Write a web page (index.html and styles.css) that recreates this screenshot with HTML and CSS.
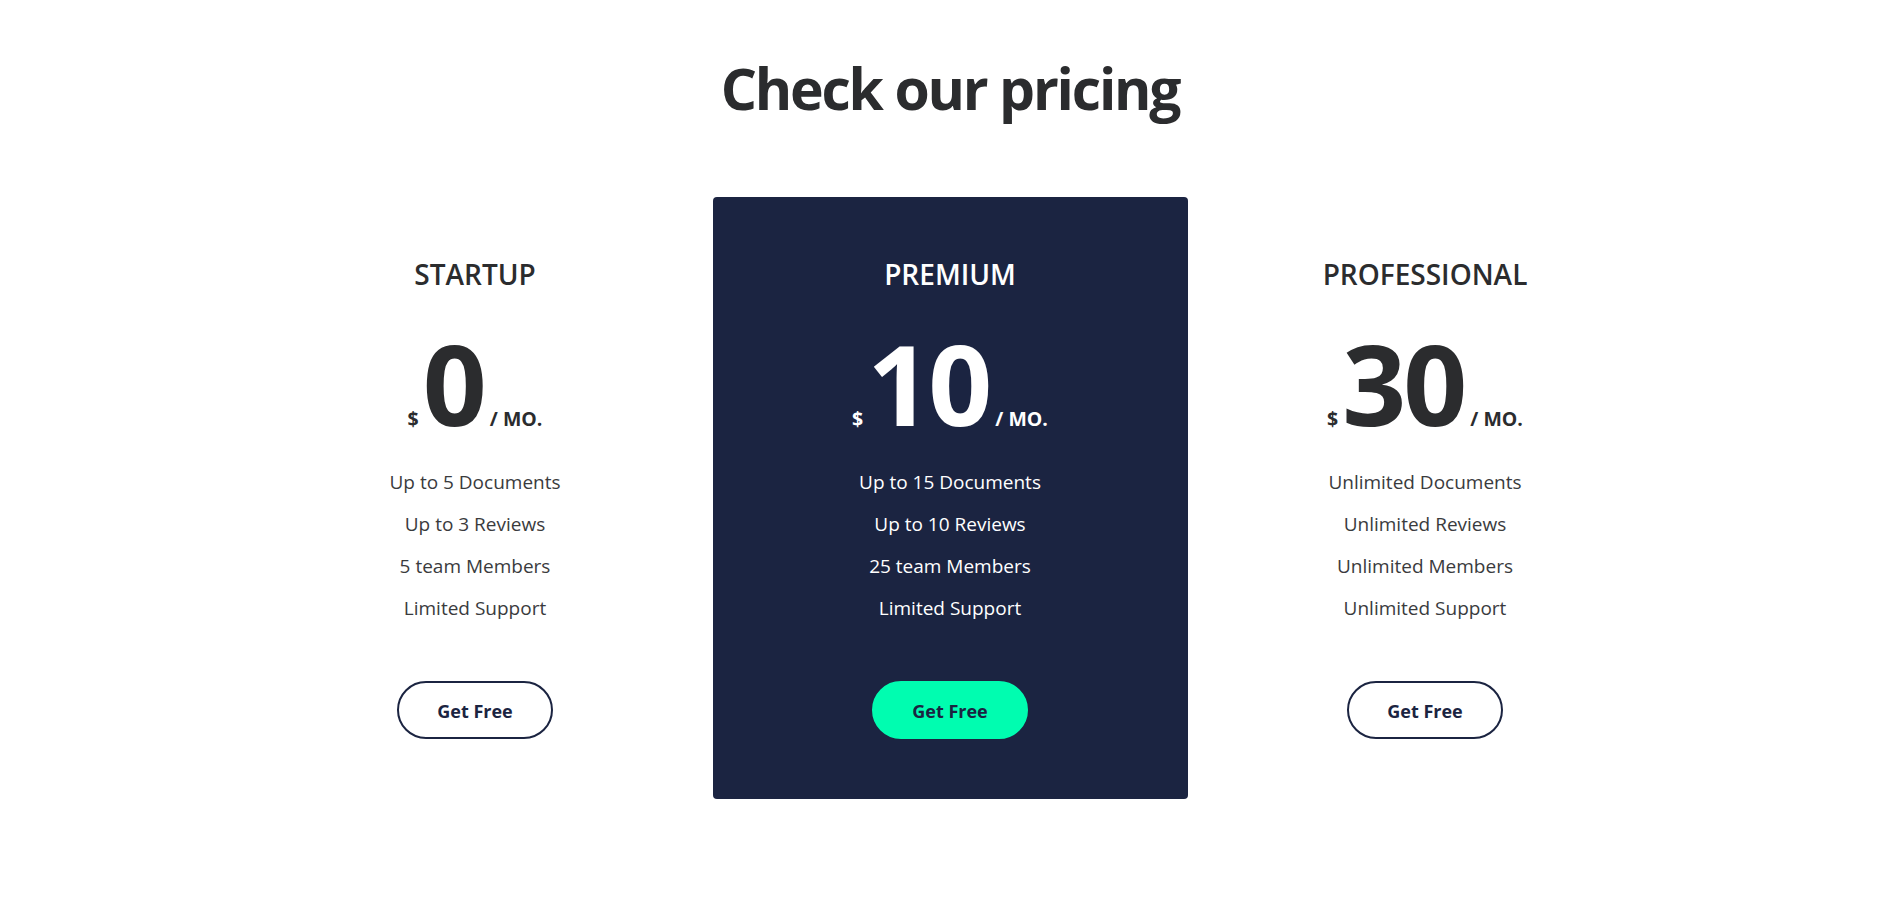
FILE: index.html
```html
<!DOCTYPE html>
<html lang="en">
<head>
<meta charset="utf-8">
<title>Pricing</title>
<link rel="stylesheet" href="styles.css">
</head>
<body>
<section class="pricing">
  <h2 class="pricing-title">Check our pricing</h2>
  <div class="plans">
    <div class="plan">
      <h3 class="plan-name">STARTUP</h3>
      <div class="price"><span class="cur">$</span><span class="amount">0</span><span class="per">/ MO.</span></div>
      <ul class="features">
        <li>Up to 5 Documents</li>
        <li>Up to 3 Reviews</li>
        <li>5 team Members</li>
        <li>Limited Support</li>
      </ul>
      <a class="btn" href="#">Get Free</a>
    </div>
    <div class="plan plan-featured">
      <h3 class="plan-name">PREMIUM</h3>
      <div class="price"><span class="cur">$</span><span class="amount">10</span><span class="per">/ MO.</span></div>
      <ul class="features">
        <li>Up to 15 Documents</li>
        <li>Up to 10 Reviews</li>
        <li>25 team Members</li>
        <li>Limited Support</li>
      </ul>
      <a class="btn" href="#">Get Free</a>
    </div>
    <div class="plan">
      <h3 class="plan-name">PROFESSIONAL</h3>
      <div class="price"><span class="cur">$</span><span class="amount">30</span><span class="per">/ MO.</span></div>
      <ul class="features">
        <li>Unlimited Documents</li>
        <li>Unlimited Reviews</li>
        <li>Unlimited Members</li>
        <li>Unlimited Support</li>
      </ul>
      <a class="btn" href="#">Get Free</a>
    </div>
  </div>
</section>
</body>
</html>
```

FILE: styles.css
```css
* { box-sizing: border-box; }
html, body { margin: 0; padding: 0; background: #fff; }
body {
  font-family: "Open Sans", "Noto Sans", sans-serif;
  color: #2b2c2e;
}
.pricing {
  padding: 53px 0 0 5px;
}
.pricing-title {
  margin: 0;
  text-align: center;
  font-size: 57px;
  line-height: 70px;
  font-weight: 700;
  color: #2b2c2e;
  letter-spacing: -2.2px;
}
.plans {
  margin-top: 74px;
  display: grid;
  grid-template-columns: repeat(3, 475px);
  justify-content: center;
}
.plan {
  padding: 60px 20px;
  text-align: center;
  display: flex;
  flex-direction: column;
  align-items: center;
  border-radius: 4px;
}
.plan-featured {
  background: #1b2441;
  color: #fff;
}
.plan-name {
  margin: 0;
  font-size: 28px;
  line-height: 34px;
  font-weight: 600;
  color: #2b2c2e;
}
.plan-featured .plan-name { color: #fff; }
.price {
  margin-top: 36px;
  display: flex;
  align-items: baseline;
  justify-content: center;
  height: 112px;
}
.amount {
  font-size: 112px;
  line-height: 112px;
  font-weight: 700;
  letter-spacing: -3px;
  margin: 0 6px 0 4px;
}
.cur, .per {
  font-size: 19.5px;
  font-weight: 700;
}
.features {
  list-style: none;
  margin: 22px 0 0;
  padding: 0;
}
.features li {
  font-size: 19px;
  line-height: 42px;
  color: #3a3b3d;
}
.plan-featured .features li { color: #fff; }
.btn {
  margin-top: 52px;
  display: inline-block;
  padding: 16px 38px 14px;
  border: 2px solid #1b2441;
  border-radius: 30px;
  font-size: 18px;
  line-height: 24px;
  font-weight: 700;
  color: #1b2441;
  text-decoration: none;
}
.plan-featured .btn {
  background: #00fdb0;
  border-color: #00fdb0;
}
```
